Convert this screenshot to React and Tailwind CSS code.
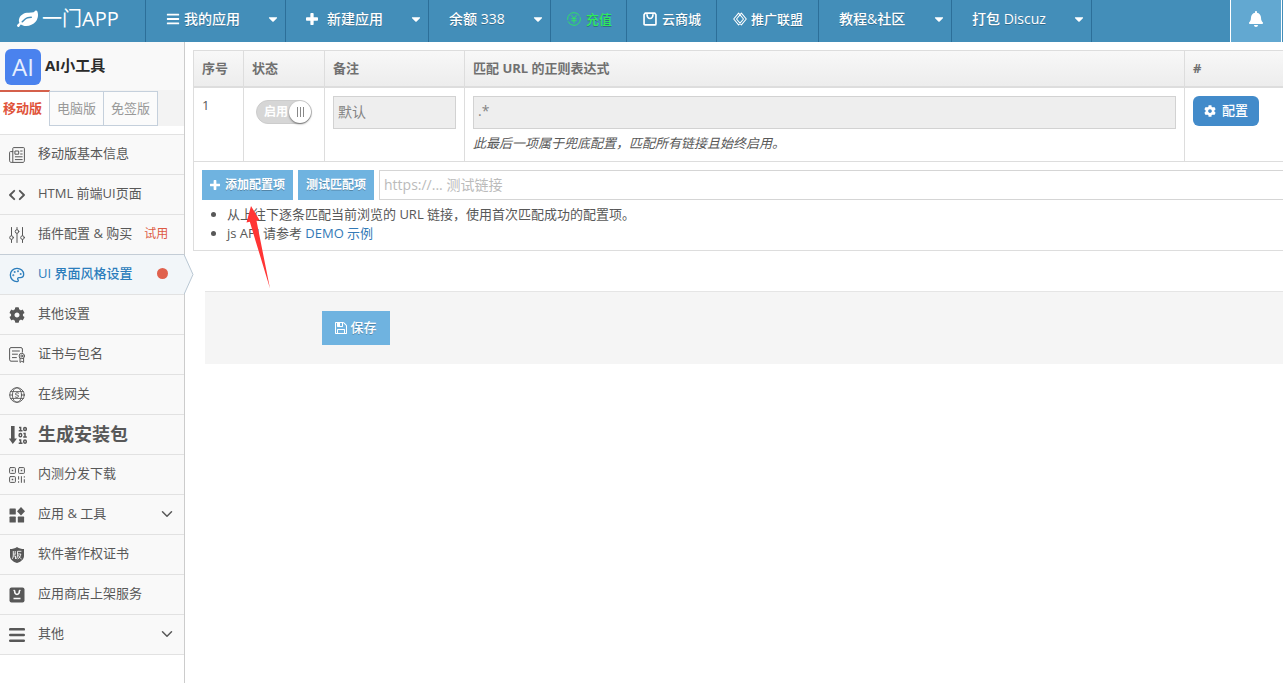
import { useState } from 'react'
import clsx from 'clsx'
import { FaBars, FaBell, FaCaretDown, FaCog } from 'react-icons/fa'
import { ChevronDown, Palette } from 'lucide-react'

/** Petite enveloppe commune pour les icônes au trait (grille 16x16). */
function Line({ children, className = 'size-4', width = 1 }) {
  return (
    <svg
      viewBox="0 0 16 16" className={clsx('shrink-0', className)} aria-hidden="true"
      fill="none" stroke="currentColor" strokeWidth={width} strokeLinecap="round" strokeLinejoin="round"
    >
      {children}
    </svg>
  )
}

function Solid({ children, className = 'size-4', viewBox = '0 0 16 16' }) {
  return (
    <svg viewBox={viewBox} className={clsx('shrink-0', className)} aria-hidden="true" fill="currentColor">
      {children}
    </svg>
  )
}

const LeafIcon = () => (
  <Solid viewBox="0 0 1792 1792" className="size-[21px]">
    <path d="M1280 704q0-26-19-45t-45-19q-172 0-318 49.5t-259.500 134-235.500 219.500q-19 21-19 45 0 26 19 45t45 19q24 0 45-19 27-24 74-71t67-66q137-124 268.500-176t313.500-52q26 0 45-19t19-45zM1792 506q0 95-20 193-46 224-184.500 383t-357.500 268q-214 108-438 108-148 0-286-47-15-5-88-42t-96-37q-16 0-39.500 32t-45 70-52.500 70-60 32q-43 0-63.500-17.500t-45.500-59.500q-2-4-6-11t-5.500-10-3-9.500-1.500-13.500q0-35 31-73.500t68-65.500 68-56 31-48q0-4-14-38t-16-44q-9-51-9-104 0-115 43.500-220t119-184.500 170.500-139 204-95.500q55-18 145-25.500t179.500-9 178.500-6 163.500-24 113.500-56.500l29.500-29.500 29.500-28 27-20 36.500-16 43.500-4.500q39 0 70.500 46t47.500 112 24 124 8 96z" />
  </Solid>
)

const PlusIcon = ({ className }) => (
  <Solid viewBox="192 128 1408 1408" className={className}>
    <path d="M1600 736v192q0 40-28 68t-68 28h-416v416q0 40-28 68t-68 28h-192q-40 0-68-28t-28-68v-416h-416q-40 0-68-28t-28-68v-192q0-40 28-68t68-28h416v-416q0-40 28-68t68-28h192q40 0 68 28t28 68v416h416q40 0 68 28t28 68z" />
  </Solid>
)

const SaveIcon = () => (
  <Solid viewBox="128 128 1536 1536" className="size-3">
    <path d="M512 1536h768v-384h-768v384zm896 0h128v-896q0-14-10-38.500t-20-34.500l-281-281q-10-10-34-20t-39-10v416q0 40-28 68t-68 28h-576q-40 0-68-28t-28-68v-416h-128v1280h128v-416q0-40 28-68t68-28h832q40 0 68 28t28 68v416zm-384-928v-320q0-13-9.500-22.500t-22.500-9.500h-192q-13 0-22.500 9.500t-9.500 22.500v320q0 13 9.500 22.500t22.500 9.500h192q13 0 22.500-9.500t9.500-22.500zm640 32v928q0 40-28 68t-68 28h-1344q-40 0-68-28t-28-68v-1344q0-40 28-68t68-28h928q40 0 88 20t76 48l280 280q28 28 48 76t20 88z" />
  </Solid>
)

const NewsIcon = () => (
  <Line>
    <path d="M3.8 14.6V1.4c0-.5.3-.8.8-.8h10c.5 0 .8.3.8.8v12.4c0 .9-.6 1.6-1.4 1.6H2.2c-.9 0-1.6-.7-1.6-1.6V5.4c0-.5.3-.8.8-.8h2.4" />
    <path d="M6.3 4h3.4v3.2H6.3zM11.6 4h1.6M11.6 7h1.6M6.3 9.8h6.9M6.3 12.6h6.9" />
  </Line>
)

const CodeIcon = () => (
  <Line width={1.9}>
    <path d="M5.2 3.800 1 8l4.200 4.200M10.800 3.800 15 8l-4.200 4.200" />
  </Line>
)

const SlidersIcon = () => (
  <Line>
    <path d="M2.5 .5v8M2.5 12.7v2.8M8 .5v2M8 6.6v8.9M13.5 .5v8M13.5 12.7v2.8" />
    <circle cx="2.5" cy="10.6" r="1.8" />
    <circle cx="8" cy="4.5" r="1.8" />
    <circle cx="13.5" cy="10.6" r="1.8" />
  </Line>
)

const CertIcon = () => (
  <Line>
    <path d="M8.6 14.2H2c-.8 0-1.4-.6-1.4-1.4V2C.6 1.2 1.2.6 2 .6h10c.8 0 1.4.6 1.4 1.4v3.2M3.4 4h7M3.4 7.2h5M3.4 10.6h4" />
    <circle cx="12.8" cy="9" r="2.700" />
    <circle cx="12.8" cy="9" r="1" />
    <path d="M11 11.400v4l1.800-1.200 1.800 1.200v-4" />
  </Line>
)

const GlobeIcon = () => (
  <Line width={0.9}>
    <circle cx="8" cy="8" r="7.3" />
    <ellipse cx="8" cy="8" rx="4.6" ry="7.3" />
    <path d="M1.5 4.6h13M1.5 11.4h13M.7 8h3M12.3 8h3" />
    <path d="M9.6 6.2 8 5.6l-1.4.8v1.2l2.8.9v1.2l-1.4.8-1.7-.6" />
  </Line>
)

const BinaryIcon = () => (
  <svg viewBox="0 0 18 18" className="size-[18px] shrink-0" aria-hidden="true">
    <path fill="currentColor" d="M2 0h3.600v12.500H8L3.800 18-.2 12.500H2z" />
    <g fill="none" stroke="currentColor" strokeWidth="1.5">
      <path d="M10 1.400h1.600V5M9.700 4.700h3.800" />
      <ellipse cx="16" cy="3" rx="1.300" ry="1.600" />
      <ellipse cx="11.400" cy="9.200" rx="1.300" ry="1.600" />
      <path d="M14.400 7.600H16v3.600M14.200 11h3.600" />
      <path d="M10 13.900h1.600v3.400M9.700 17.200h3.800" />
      <ellipse cx="16" cy="15.600" rx="1.300" ry="1.600" />
    </g>
  </svg>
)

const QrIcon = () => (
  <Line>
    <rect x=".6" y=".6" width="5.8" height="5.8" rx=".8" />
    <rect x="9.6" y=".6" width="5.8" height="5.8" rx=".8" />
    <rect x=".6" y="9.6" width="5.8" height="5.8" rx=".8" />
    <path d="M2.700 3.500h1.600M11.700 3.500h1.600M2.700 12.500h1.600" strokeWidth="1.6" strokeLinecap="butt" />
    <path d="M9.6 9.6v2.6M9.6 14.6v.8M12.4 9.6v5.8M15.3 9.6v.6M15.3 12.6v2.8" />
  </Line>
)

const AppsIcon = () => (
  <Solid>
    <rect x=".5" y="1.500" width="6.300" height="6" rx=".6" />
    <path d="M12 0 16 4.200 12 8.400 8 4.200z" />
    <rect x=".5" y="9.600" width="6.300" height="6" rx=".6" />
    <rect x="8.800" y="9.600" width="6.300" height="6" rx=".6" />
  </Solid>
)

const ShieldIcon = () => (
  <Solid>
    <path d="M8 0c2 1.400 4.500 2 7 2v7c0 3.400-3.200 5.800-7 7-3.800-1.200-7-3.600-7-7V2c2.500 0 5-.6 7-2z" />
    <path
      d="M4.300 4v3.200h2.500M4.300 9H6.500V12M6.200 4v3M4.300 7.200c0 2-.2 3.600-.9 4.600M12.400 4.300H8.500v3.300c0 2-.3 3.200-1 4.300M8.600 7h3.200c-.4 2.400-1.600 4-3 5M9.500 8.200c.7 1.900 1.600 3 3 3.800"
      fill="none" stroke="#f9f9f9" strokeWidth=".9"
    />
  </Solid>
)

const StoreIcon = () => (
  <Solid>
    <rect x=".5" y=".5" width="15" height="15" rx="2" />
    <path d="M4.600 3.200l1 .6c0 2.400.9 3.600 2.400 3.600s2.400-1.200 2.400-3.600l1-.6M4.500 11.600h7" fill="none" stroke="#f9f9f9" strokeWidth="1.500" />
  </Solid>
)

const MenuIcon = () => (
  <Solid>
    <rect x="0" y="1" width="16" height="2.600" rx="1.200" />
    <rect x="0" y="6.700" width="16" height="2.600" rx="1.200" />
    <rect x="0" y="12.400" width="16" height="2.600" rx="1.200" />
  </Solid>
)

const YenIcon = () => (
  <Line className="size-[14px]">
    <circle cx="8" cy="8" r="7.300" strokeDasharray="19 2.500" />
    <path d="M5.300 4 8 7.200 10.700 4M8 7.200V12.500M5.400 7.700h5.200M5.400 10h5.200" />
  </Line>
)

const BagIcon = () => (
  <Line className="size-[14px]" width={1.9}>
    <path d="M2.600 1.200h10.800l1.400 2v10.400c0 .8-.5 1.200-1.200 1.200H2.400c-.7 0-1.200-.4-1.200-1.200V3.200z" />
    <path d="M4.600 3.200c.2 2.600 1.400 4.200 3.400 4.200s3.200-1.600 3.400-4.200" />
  </Line>
)

const AllianceIcon = () => (
  <Line className="size-[14px]" width={1.2}>
    <path d="M6.400 1.200.8 8l5.600 6.800L12 8zM9.600 1.200 15.200 8l-5.600 6.800L4 8z" />
  </Line>
)

const NAV = [
  { label: '我的应用', icon: <FaBars className="size-[14px]" />, menu: true, box: 'w-[140px] pl-5 gap-1' },
  { label: '新建应用', icon: <PlusIcon className="size-3" />, menu: true, box: 'w-[143px] pl-5 gap-[9px]' },
  { label: '余额 338', menu: true, box: 'w-[122px] pl-5' },
  { label: '充值', icon: <YenIcon />, box: 'w-[76px] pl-4 gap-[5px] text-[13px] text-[#2eea5c]' },
  { label: '云商城', icon: <BagIcon />, box: 'w-[90px] pl-4 gap-[5px] text-[13px]' },
  { label: '推广联盟', icon: <AllianceIcon />, box: 'w-[102px] pl-4 gap-1 text-[13px]' },
  { label: '教程&社区', menu: true, box: 'w-[133px] pl-5' },
  { label: '打包 Discuz', menu: true, box: 'w-[140px] pl-5' },
]

const MENU = [
  { label: '移动版基本信息', icon: <NewsIcon /> },
  { label: 'HTML 前端UI页面', icon: <CodeIcon /> },
  { label: '插件配置 & 购买', icon: <SlidersIcon />, tag: '试用' },
  { label: 'UI 界面风格设置', icon: <Palette className="size-4" />, active: true },
  { label: '其他设置', icon: <FaCog className="size-4" /> },
  { label: '证书与包名', icon: <CertIcon /> },
  { label: '在线网关', icon: <GlobeIcon /> },
  { label: '生成安装包', icon: <BinaryIcon />, big: true },
  { label: '内测分发下载', icon: <QrIcon /> },
  { label: '应用 & 工具', icon: <AppsIcon />, open: true },
  { label: '软件著作权证书', icon: <ShieldIcon /> },
  { label: '应用商店上架服务', icon: <StoreIcon /> },
  { label: '其他', icon: <MenuIcon />, open: true },
]

function TopBar() {
  return (
    <header className="flex h-[42px] bg-[#438eb9] text-white">
      <a href="#" className="flex w-[146px] shrink-0 items-center gap-1 border-r border-[#2c6f99] pb-1 pl-[17px] text-xl">
        <LeafIcon />
        <span>一门APP</span>
      </a>
      <nav className="flex flex-1">
        {NAV.map(item => (
          <a
            key={item.label} href="#"
            className={clsx(
              'flex shrink-0 items-center border-r border-[#2c6f99] pr-[5px] pb-1 text-sm font-medium whitespace-nowrap text-shadow-[0_1px_0_rgba(0,0,0,0.25)]',
              item.box,
            )}
          >
            {item.icon}
            <span>{item.label}</span>
            {item.menu && <FaCaretDown className="ml-auto size-[14px]" />}
          </a>
        ))}
      </nav>
      <button aria-label="通知" className="mr-px flex w-[52px] items-center justify-center border-x border-white bg-[#62a8d1] pb-1">
        <FaBell className="size-4" />
      </button>
    </header>
  )
}

function SideItem({ item }) {
  return (
    <li
      className={clsx(
        'relative h-10 border-t',
        item.active ? 'border-[#c4cdd6] bg-[#f2f6f9] text-[#2b7dbc]' : 'border-[#e2e2e2] bg-[#f9f9f9] text-[#585858]',
      )}
    >
      <a href="#" className="flex h-full items-center pr-2 pb-0.5 pl-[9px]">
        <span className="flex w-[29px] shrink-0 items-center pt-0.5">{item.icon}</span>
        <span className={clsx('whitespace-nowrap', item.big && 'text-lg font-bold', item.active && 'font-medium')}>
          {item.label}
        </span>
        {item.tag && <span className="ml-3 text-xs text-[#dd5a43]">{item.tag}</span>}
        {item.active && <span className="mr-2 ml-auto size-[11px] rounded-full bg-[#e0614d]" />}
        {item.open && <ChevronDown className="ml-auto size-[18px]" strokeWidth={2} />}
      </a>
      {item.active && (
        <svg viewBox="0 0 10 41" className="absolute -top-px left-full h-[41px] w-[10px]" aria-hidden="true">
          <path d="M0 .5 9 20.500 0 40.500" fill="#f2f6f9" stroke="#b9c7d3" />
        </svg>
      )}
    </li>
  )
}

function Sidebar() {
  const tab = 'flex h-[35px] items-center border border-l-0 border-[#c5d0dc] bg-[#fbfbfb] text-[#999]'
  return (
    <aside className="w-[185px] shrink-0 border-r border-[#ccc]">
      <div className="flex h-12 items-center gap-1 bg-[#f9f9f9] pt-0.5 pl-[5px]">
        <span className="flex size-9 items-center justify-center rounded-md bg-[#4a82ee] text-2xl text-[#e6efff]">AI</span>
        <strong className="pb-1 text-[15px] font-bold text-[#2b2b2b]">AI小工具</strong>
      </div>
      <div className="flex h-9 items-end bg-[#f3f3f3]">
        <button className="h-full w-[50px] border-t-2 border-r border-t-[#d5604b] border-r-[#c5d0dc] bg-white pl-[3px] text-left font-bold whitespace-nowrap text-[#e0533a]">
          移动版
        </button>
        <button className={clsx(tab, 'w-[54px] justify-center')}>电脑版</button>
        <button className={clsx(tab, 'w-[54px] justify-center')}>免签版</button>
      </div>
      <ul className="mt-2 border-b border-[#e2e2e2]">
        {MENU.map(item => <SideItem key={item.label} item={item} />)}
      </ul>
    </aside>
  )
}

function Toggle() {
  const [on, setOn] = useState(true)
  return (
    <label className="mt-1 ml-1 flex h-6 w-14 items-center justify-between rounded-full border border-[#ccc] bg-[#d6d6d6] pl-[7px] text-xs font-bold text-white">
      <input type="checkbox" className="sr-only" checked={on} onChange={e => setOn(e.target.checked)} />
      启用
      <span className="flex size-[22px] items-center justify-center gap-[2px] rounded-full bg-white shadow-[0_1px_2px_rgba(0,0,0,0.5)]">
        <i className="h-2.5 w-px bg-[#888]" />
        <i className="h-2.5 w-px bg-[#888]" />
        <i className="h-2.5 w-px bg-[#888]" />
      </span>
    </label>
  )
}

function RuleTable() {
  const th = 'border-l border-[#ddd] px-2 text-left font-bold text-[#707070]'
  const td = 'border-b border-l border-[#ddd] p-2 align-top'
  const field = 'block h-[33px] w-full border border-[#d2d2d2] bg-[#eee] px-1 pb-1 text-sm text-[#848484]'
  const blue = 'flex h-[30px] shrink-0 items-center justify-center bg-[#6fb3e0] text-xs font-bold text-white text-shadow-[0_1px_0_rgba(0,0,0,0.25)]'
  return (
    <table className="w-full table-fixed border-separate border-spacing-0 border-t border-b border-[#ddd]">
      <colgroup>
        <col className="w-[50px]" />
        <col className="w-[81px]" />
        <col className="w-[140px]" />
        <col />
        <col className="w-[99px]" />
      </colgroup>
      <thead>
        <tr className="h-[37px] bg-linear-to-b from-[#f8f8f8] to-[#ececec]">
          {['序号', '状态', '备注', '匹配 URL 的正则表达式', '#'].map(t => (
            <th key={t} className={clsx(th, 'border-b-2')}>{t}</th>
          ))}
        </tr>
      </thead>
      <tbody>
        <tr className="h-[73px]">
          <td className={td}>1</td>
          <td className={td}><Toggle /></td>
          <td className={td}><input aria-label="备注" disabled defaultValue="默认" className={field} /></td>
          <td className={td}>
            <input aria-label="匹配 URL 的正则表达式" disabled defaultValue=".*" className={field} />
            <em className="mt-1 block leading-5">此最后一项属于兜底配置，匹配所有链接且始终启用。</em>
          </td>
          <td className={td}>
            <button className="flex h-[30px] w-[66px] items-center justify-center gap-1.5 rounded-md bg-[#428bca] pb-px font-medium text-white">
              <FaCog className="size-3" />
              配置
            </button>
          </td>
        </tr>
        <tr>
          <td colSpan={5} className="border-l border-[#ddd] pt-2 pb-[7px] pl-2">
            <div className="relative flex gap-[5px]">
              <button className={clsx(blue, 'w-[91px] gap-[5px]')}>
                <PlusIcon className="size-[10px]" />
                添加配置项
              </button>
              <button className={clsx(blue, 'w-[76px]')}>测试匹配项</button>
              <input
                aria-label="测试链接" placeholder="https://... 测试链接"
                className="h-[30px] min-w-0 flex-1 border border-r-0 border-[#d5d5d5] px-1 pb-0.5 text-sm placeholder:text-[#bbb]"
              />
              <svg viewBox="0 0 24 83" className="pointer-events-none absolute top-9 left-11 h-[83px] w-6" aria-hidden="true">
                <path d="M5 0 13.500 14l-3 .8L24 82.500 3.800 15.800l-3.300.8z" fill="#ff3535" />
              </svg>
            </div>
            <ul className="mt-[5px] list-disc pl-[25px] leading-[19px]">
              <li>从上往下逐条匹配当前浏览的 URL 链接，使用首次匹配成功的配置项。</li>
              <li>js API 请参考 <a href="#" className="text-[#337ab7]">DEMO 示例</a></li>
            </ul>
          </td>
        </tr>
      </tbody>
    </table>
  )
}

export default function App() {
  return (
    <div className="flex min-h-screen flex-col bg-white font-['Open_Sans','Noto_Sans_CJK_SC',sans-serif] text-[13px] text-[#585858]">
      <TopBar />
      <div className="flex flex-1">
        <Sidebar />
        <main className="min-w-0 flex-1 pt-2 pl-2">
          <RuleTable />
          <div className="mt-10 ml-3 border-t border-[#e5e5e5] bg-[#f5f5f5] py-[19px] pl-[117px]">
            <button className="flex h-[34px] w-[68px] items-center justify-center gap-[3px] bg-[#6fb3e0] font-medium text-white text-shadow-[0_1px_0_rgba(0,0,0,0.25)]">
              <SaveIcon />
              保存
            </button>
          </div>
        </main>
      </div>
    </div>
  )
}
